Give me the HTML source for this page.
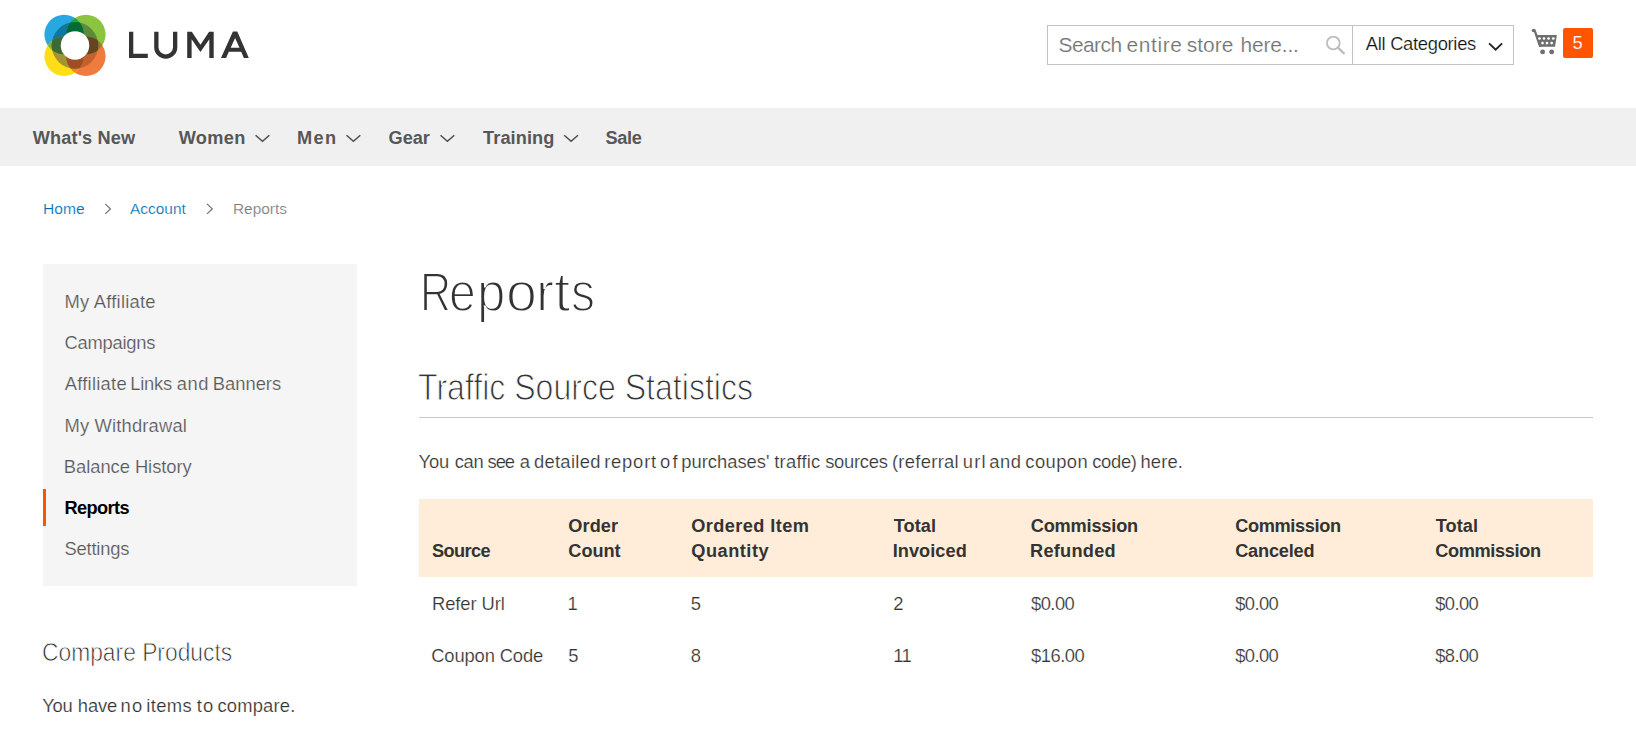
<!DOCTYPE html>
<html><head><meta charset="utf-8"><title>Reports</title>
<style>
html,body{margin:0;padding:0;background:#fff;}
body{width:1636px;height:733px;position:relative;overflow:hidden;font-family:"Liberation Sans",sans-serif;}
.t{position:absolute;line-height:1;white-space:nowrap;}
.g{position:absolute;font-size:0;line-height:1;white-space:nowrap;}
.g>.t{position:static;display:inline-block;vertical-align:baseline;}
.bx{position:absolute;}
svg.ov{position:absolute;left:0;top:0;}
</style></head><body>
<div class="bx" style="left:0;top:108px;width:1636px;height:58px;background:#f0f0f0"></div>
<div class="bx" style="left:1047px;top:25px;width:465px;height:38px;border:1px solid #c2c2c2;background:#fff"></div>
<div class="bx" style="left:1352px;top:26px;width:1px;height:38px;background:#c2c2c2"></div>
<div class="bx" style="left:1563px;top:28px;width:30px;height:30px;background:#ff5501;border-radius:2px"></div>
<div class="bx" style="left:43px;top:264px;width:314px;height:322px;background:#f5f5f5"></div>
<div class="bx" style="left:43px;top:489px;width:3px;height:37px;background:#ff5501"></div>
<div class="bx" style="left:419px;top:417px;width:1174px;height:1px;background:#c6c6c6"></div>
<div class="bx" style="left:419px;top:499px;width:1174px;height:78px;background:#ffedd9"></div>
<svg class="ov" width="1636" height="733" viewBox="0 0 1636 733">
<defs><clipPath id="cb"><circle cx="64.1" cy="34.5" r="19.7"/></clipPath><clipPath id="cg"><circle cx="85.9" cy="34.5" r="19.7"/></clipPath><clipPath id="co"><circle cx="85.9" cy="56.3" r="19.7"/></clipPath><clipPath id="cy"><circle cx="64.1" cy="56.3" r="19.7"/></clipPath><clipPath id="ring"><circle cx="75.0" cy="45.4" r="23.3"/></clipPath></defs><g><circle cx="64.1" cy="34.5" r="19.7" fill="#27a8e0"/><circle cx="85.9" cy="34.5" r="19.7" fill="#8bc53f"/><circle cx="85.9" cy="56.3" r="19.7" fill="#f07b3f"/><circle cx="64.1" cy="56.3" r="19.7" fill="#ffde17"/><circle cx="85.9" cy="34.5" r="19.7" fill="#1aa54a" clip-path="url(#cb)"/><circle cx="85.9" cy="56.3" r="19.7" fill="#9a7637" clip-path="url(#cg)"/><circle cx="64.1" cy="56.3" r="19.7" fill="#f5822a" clip-path="url(#co)"/><circle cx="64.1" cy="34.5" r="19.7" fill="#7db04a" clip-path="url(#cy)"/></g><g clip-path="url(#ring)"><circle cx="64.1" cy="34.5" r="19.7" fill="#0e76a1"/><circle cx="85.9" cy="34.5" r="19.7" fill="#5c8b3e"/><circle cx="85.9" cy="56.3" r="19.7" fill="#c3602f"/><circle cx="64.1" cy="56.3" r="19.7" fill="#a39332"/><circle cx="85.9" cy="34.5" r="19.7" fill="#016c34" clip-path="url(#cb)"/><circle cx="85.9" cy="56.3" r="19.7" fill="#634620" clip-path="url(#cg)"/><circle cx="64.1" cy="56.3" r="19.7" fill="#a04d24" clip-path="url(#co)"/><circle cx="64.1" cy="34.5" r="19.7" fill="#3b6b33" clip-path="url(#cy)"/></g><circle cx="75.0" cy="45.4" r="14.25" fill="#fff"/>
<polyline points="255.60,135.3 262.50,141.3 269.40,135.3" fill="none" stroke="#4d4d4d" stroke-width="1.5"/>
<polyline points="346.50,135.3 353.40,141.3 360.30,135.3" fill="none" stroke="#4d4d4d" stroke-width="1.5"/>
<polyline points="440.50,135.3 447.40,141.3 454.30,135.3" fill="none" stroke="#4d4d4d" stroke-width="1.5"/>
<polyline points="564.20,135.3 571.10,141.3 578.00,135.3" fill="none" stroke="#4d4d4d" stroke-width="1.5"/>
<polyline points="1489.10,43.4 1495.60,49.6 1502.10,43.4" fill="none" stroke="#222" stroke-width="1.9"/>
<polyline points="105.2,203.9 110.4,208.9 105.2,213.9" fill="none" stroke="#777" stroke-width="1.3"/>
<polyline points="207.0,203.9 212.2,208.9 207.0,213.9" fill="none" stroke="#777" stroke-width="1.3"/>
<circle cx="1333.3" cy="43.0" r="6.35" fill="none" stroke="#bdbdbd" stroke-width="1.8"/>
<line x1="1338.0" y1="47.6" x2="1343.9" y2="53.3" stroke="#bdbdbd" stroke-width="2.3" stroke-linecap="round"/>
<circle cx="1533.5" cy="30.6" r="1.75" fill="#6e6e6e"/>
<path d="M1533.3,29.9 L1535.3,29.3 L1537.5,35.05 L1541.6,46.85 L1539.0,46.85 L1535.0,35.05 Z" fill="#6e6e6e"/>
<path d="M1537.3,35.05 H1556.9 L1555,46.85 H1539.3 Z" fill="#6e6e6e"/>
<circle cx="1539.5" cy="38.5" r="1.35" fill="#fff"/>
<circle cx="1544.0" cy="38.5" r="1.35" fill="#fff"/>
<circle cx="1548.6" cy="38.5" r="1.35" fill="#fff"/>
<circle cx="1553.3" cy="38.5" r="1.35" fill="#fff"/>
<circle cx="1542.5" cy="43.1" r="1.35" fill="#fff"/>
<circle cx="1547.0" cy="43.1" r="1.35" fill="#fff"/>
<circle cx="1551.65" cy="43.1" r="1.35" fill="#fff"/>
<circle cx="1542.6" cy="51.9" r="2.45" fill="#6e6e6e"/><circle cx="1551.65" cy="51.9" r="2.45" fill="#6e6e6e"/>
<path d="M131.15,31.8 V55.85 H147.8" fill="none" stroke="#333" stroke-width="4.3"/>
<path d="M156.35,31.8 V47.2 A9.4,9.4 0 0 0 175.15,47.2 V31.8" fill="none" stroke="#333" stroke-width="4.3"/>
<path d="M187.2,57.9 V31.8 H191.8 L200.45,44.8 L209.1,31.8 H213.7 V57.9 H209.3 V39.3 L200.45,51.9 L191.6,39.3 V57.9 Z" fill="#333"/>
<path d="M221,57.9 L232.9,31.6 H237.3 L248.8,57.9 H243.9 L241.2,51.8 H228.8 L226.1,57.9 Z M235.1,38.0 L230.7,47.7 H239.5 Z" fill="#333" fill-rule="evenodd"/>
</svg>
<span class="t" id="n1" style="left:32.64px;top:129.11px;font-size:18.18px;color:#575757;font-weight:700;letter-spacing:0.149px;">What&#x27;s New</span>
<span class="t" id="n2" style="left:178.64px;top:129.11px;font-size:18.18px;color:#575757;font-weight:700;letter-spacing:0.380px;">Women</span>
<span class="t" id="n3" style="left:297.03px;top:129.11px;font-size:18.18px;color:#575757;font-weight:700;letter-spacing:1.365px;">Men</span>
<span class="t" id="n4" style="left:388.62px;top:129.11px;font-size:18.18px;color:#575757;font-weight:700;letter-spacing:-0.053px;">Gear</span>
<span class="t" id="n5" style="left:483.04px;top:129.11px;font-size:18.18px;color:#575757;font-weight:700;letter-spacing:0.089px;">Training</span>
<span class="t" id="n6" style="left:605.58px;top:129.11px;font-size:18.18px;color:#575757;font-weight:700;letter-spacing:-0.373px;">Sale</span>
<span class="g" style="left:1058.47px;top:35.30px"><span class="t" id="s1a" style="width:68.09px;font-size:20.91px;color:#727272;letter-spacing:-0.528px;-webkit-text-stroke:0.2px #fff;">Search</span> <span class="t" id="s1b" style="width:60.19px;font-size:20.91px;color:#727272;letter-spacing:0.618px;-webkit-text-stroke:0.2px #fff;">entire</span> <span class="t" id="s1c" style="width:53.70px;font-size:20.91px;color:#727272;letter-spacing:0.052px;-webkit-text-stroke:0.2px #fff;">store</span> <span class="t" id="s1d" style="font-size:20.91px;color:#727272;letter-spacing:-0.127px;-webkit-text-stroke:0.2px #fff;">here...</span></span>
<span class="t" id="s2" style="left:1365.87px;top:35.46px;font-size:18.36px;color:#111111;letter-spacing:-0.302px;-webkit-text-stroke:0.2px #fff;">All Categories</span>
<span class="t" id="s3" style="left:1572.60px;top:33.96px;font-size:18.36px;color:#ffffff;-webkit-text-stroke:0.2px #ff5501;">5</span>
<span class="t" id="b1" style="left:42.72px;top:201.56px;font-size:14.69px;color:#006bb4;-webkit-text-stroke:0.2px #fff;transform:scaleX(1.0632);transform-origin:0 0;">Home</span>
<span class="t" id="b2" style="left:130.43px;top:201.56px;font-size:14.69px;color:#006bb4;-webkit-text-stroke:0.2px #fff;transform:scaleX(1.0509);transform-origin:0 0;">Account</span>
<span class="t" id="b3" style="left:232.53px;top:201.56px;font-size:14.69px;color:#777777;-webkit-text-stroke:0.2px #fff;transform:scaleX(1.0480);transform-origin:0 0;">Reports</span>
<span class="t" id="m1" style="left:64.44px;top:293.46px;font-size:18.36px;color:#575757;letter-spacing:0.246px;-webkit-text-stroke:0.2px #f5f5f5;">My Affiliate</span>
<span class="t" id="m2" style="left:64.51px;top:333.96px;font-size:18.36px;color:#575757;letter-spacing:-0.255px;-webkit-text-stroke:0.2px #f5f5f5;">Campaigns</span>
<span class="g" style="left:64.64px;top:374.96px"><span class="t" id="m3a" style="width:65.58px;font-size:18.36px;color:#575757;letter-spacing:0.271px;-webkit-text-stroke:0.2px #f5f5f5;">Affiliate</span> <span class="t" id="m3b" style="width:46.59px;font-size:18.36px;color:#575757;letter-spacing:-0.195px;-webkit-text-stroke:0.2px #f5f5f5;">Links</span> <span class="t" id="m3c" style="width:35.99px;font-size:18.36px;color:#575757;letter-spacing:0.580px;-webkit-text-stroke:0.2px #f5f5f5;">and</span> <span class="t" id="m3d" style="font-size:18.36px;color:#575757;-webkit-text-stroke:0.2px #f5f5f5;">Banners</span></span>
<span class="t" id="m4" style="left:64.44px;top:417.46px;font-size:18.36px;color:#575757;letter-spacing:0.170px;-webkit-text-stroke:0.2px #f5f5f5;">My Withdrawal</span>
<span class="t" id="m5" style="left:63.83px;top:458.46px;font-size:18.36px;color:#575757;letter-spacing:-0.047px;-webkit-text-stroke:0.2px #f5f5f5;">Balance History</span>
<span class="t" id="m6" style="left:64.42px;top:498.61px;font-size:18.18px;color:#000000;font-weight:700;letter-spacing:-0.563px;">Reports</span>
<span class="t" id="m7" style="left:64.43px;top:540.46px;font-size:18.36px;color:#575757;letter-spacing:-0.181px;-webkit-text-stroke:0.2px #f5f5f5;">Settings</span>
<span class="t" id="c1" style="left:42.39px;top:639.85px;font-size:25.1px;color:#282828;-webkit-text-stroke:0.75px #fff;transform:scaleX(0.9090);transform-origin:0 0;">Compare Products</span>
<span class="g" style="left:42.30px;top:697.46px"><span class="t" id="c2a" style="width:35.48px;font-size:18.36px;color:#333333;letter-spacing:-0.310px;-webkit-text-stroke:0.2px #fff;">You</span> <span class="t" id="c2b" style="width:42.80px;font-size:18.36px;color:#333333;letter-spacing:-0.090px;-webkit-text-stroke:0.2px #fff;">have</span> <span class="t" id="c2c" style="width:25.67px;font-size:18.36px;color:#333333;letter-spacing:1.170px;-webkit-text-stroke:0.2px #fff;">no</span> <span class="t" id="c2d" style="width:50.52px;font-size:18.36px;color:#333333;letter-spacing:0.420px;-webkit-text-stroke:0.2px #fff;">items</span> <span class="t" id="c2e" style="width:20.79px;font-size:18.36px;color:#333333;letter-spacing:1.180px;-webkit-text-stroke:0.2px #fff;">to</span> <span class="t" id="c2f" style="font-size:18.36px;color:#333333;letter-spacing:0.177px;-webkit-text-stroke:0.2px #fff;">compare.</span></span>
<span class="g" style="left:420.03px;top:264.85px"><span class="t" id="h10" style="width:28.67px;font-size:55.7px;color:#333333;-webkit-text-stroke:1.8px #fff;transform:scaleX(0.7739);transform-origin:0 0;">R</span><span class="t" id="h11" style="width:28.68px;font-size:55.7px;color:#333333;-webkit-text-stroke:1.8px #fff;transform:scaleX(0.8660);transform-origin:0 0;">e</span><span class="t" id="h12" style="width:28.52px;font-size:55.7px;color:#333333;-webkit-text-stroke:1.8px #fff;transform:scaleX(0.9167);transform-origin:0 0;">p</span><span class="t" id="h13" style="width:29.70px;font-size:55.7px;color:#333333;-webkit-text-stroke:1.8px #fff;transform:scaleX(0.9980);transform-origin:0 0;">o</span><span class="t" id="h14" style="width:18.18px;font-size:55.7px;color:#333333;-webkit-text-stroke:1.8px #fff;transform:scaleX(0.9731);transform-origin:0 0;">r</span><span class="t" id="h15" style="width:17.07px;font-size:55.7px;color:#333333;-webkit-text-stroke:1.8px #fff;transform:scaleX(1.0577);transform-origin:0 0;">t</span><span class="t" id="h16" style="font-size:55.7px;color:#333333;-webkit-text-stroke:1.8px #fff;transform:scaleX(0.8614);transform-origin:0 0;">s</span></span>
<span class="t" id="h2" style="left:418.31px;top:370.48px;font-size:36.0px;color:#333333;-webkit-text-stroke:1.0px #fff;transform:scaleX(0.8907);transform-origin:0 0;">Traffic Source Statistics</span>
<span class="g" style="left:418.54px;top:453.46px"><span class="t" id="p1a" style="width:36.11px;font-size:18.36px;color:#333333;letter-spacing:-0.185px;-webkit-text-stroke:0.2px #fff;">You</span> <span class="t" id="p1b" style="width:32.85px;font-size:18.36px;color:#333333;letter-spacing:-0.295px;-webkit-text-stroke:0.2px #fff;">can</span> <span class="t" id="p1c" style="width:32.22px;font-size:18.36px;color:#333333;letter-spacing:-1.030px;-webkit-text-stroke:0.2px #fff;">see</span> <span class="t" id="p1d" style="width:14.20px;font-size:18.36px;color:#333333;-webkit-text-stroke:0.2px #fff;">a</span> <span class="t" id="p1e" style="width:70.25px;font-size:18.36px;color:#333333;letter-spacing:0.316px;-webkit-text-stroke:0.2px #fff;">detailed</span> <span class="t" id="p1f" style="width:55.91px;font-size:18.36px;color:#333333;letter-spacing:0.812px;-webkit-text-stroke:0.2px #fff;">report</span> <span class="t" id="p1g" style="width:21.30px;font-size:18.36px;color:#333333;letter-spacing:2.150px;-webkit-text-stroke:0.2px #fff;">of</span> <span class="t" id="p1h" style="width:92.90px;font-size:18.36px;color:#333333;letter-spacing:-0.013px;-webkit-text-stroke:0.2px #fff;">purchases&#x27;</span> <span class="t" id="p1i" style="width:50.92px;font-size:18.36px;color:#333333;letter-spacing:0.248px;-webkit-text-stroke:0.2px #fff;">traffic</span> <span class="t" id="p1j" style="width:66.81px;font-size:18.36px;color:#333333;letter-spacing:-0.268px;-webkit-text-stroke:0.2px #fff;">sources</span> <span class="t" id="p1k" style="width:70.89px;font-size:18.36px;color:#333333;letter-spacing:0.309px;-webkit-text-stroke:0.2px #fff;">(referral</span> <span class="t" id="p1l" style="width:26.54px;font-size:18.36px;color:#333333;letter-spacing:1.220px;-webkit-text-stroke:0.2px #fff;">url</span> <span class="t" id="p1m" style="width:36.01px;font-size:18.36px;color:#333333;letter-spacing:0.495px;-webkit-text-stroke:0.2px #fff;">and</span> <span class="t" id="p1n" style="width:66.81px;font-size:18.36px;color:#333333;letter-spacing:0.418px;-webkit-text-stroke:0.2px #fff;">coupon</span> <span class="t" id="p1o" style="width:48.37px;font-size:18.36px;color:#333333;letter-spacing:-0.288px;-webkit-text-stroke:0.2px #fff;">code)</span> <span class="t" id="p1p" style="font-size:18.36px;color:#333333;letter-spacing:0.142px;-webkit-text-stroke:0.2px #fff;">here.</span></span>
<span class="t" id="t1" style="left:431.97px;top:541.61px;font-size:18.18px;color:#333333;font-weight:700;letter-spacing:-0.594px;">Source</span>
<span class="t" id="t2a" style="left:568.30px;top:516.61px;font-size:18.18px;color:#333333;font-weight:700;letter-spacing:0.077px;">Order</span>
<span class="t" id="t2b" style="left:568.30px;top:541.61px;font-size:18.18px;color:#333333;font-weight:700;letter-spacing:-0.040px;">Count</span>
<span class="t" id="t3a" style="left:691.30px;top:516.61px;font-size:18.18px;color:#333333;font-weight:700;letter-spacing:0.408px;">Ordered Item</span>
<span class="t" id="t3b" style="left:691.29px;top:541.61px;font-size:18.18px;color:#333333;font-weight:700;letter-spacing:0.516px;">Quantity</span>
<span class="t" id="t4a" style="left:893.73px;top:516.61px;font-size:18.18px;color:#333333;font-weight:700;letter-spacing:0.037px;">Total</span>
<span class="t" id="t4b" style="left:892.73px;top:541.61px;font-size:18.18px;color:#333333;font-weight:700;letter-spacing:0.047px;">Invoiced</span>
<span class="t" id="t5a" style="left:1030.76px;top:516.61px;font-size:18.18px;color:#333333;font-weight:700;letter-spacing:-0.179px;">Commission</span>
<span class="t" id="t5b" style="left:1030.07px;top:541.61px;font-size:18.18px;color:#333333;font-weight:700;letter-spacing:0.253px;">Refunded</span>
<span class="t" id="t6a" style="left:1235.14px;top:516.61px;font-size:18.18px;color:#333333;font-weight:700;letter-spacing:-0.334px;">Commission</span>
<span class="t" id="t6b" style="left:1235.14px;top:541.61px;font-size:18.18px;color:#333333;font-weight:700;letter-spacing:-0.186px;">Canceled</span>
<span class="t" id="t7a" style="left:1435.83px;top:516.61px;font-size:18.18px;color:#333333;font-weight:700;letter-spacing:0.013px;">Total</span>
<span class="t" id="t7b" style="left:1435.14px;top:541.61px;font-size:18.18px;color:#333333;font-weight:700;letter-spacing:-0.332px;">Commission</span>
<span class="t" id="r1a" style="left:431.97px;top:595.46px;font-size:18.36px;color:#333333;letter-spacing:-0.085px;-webkit-text-stroke:0.2px #fff;">Refer Url</span>
<span class="t" id="r1b" style="left:567.41px;top:595.46px;font-size:18.36px;color:#333333;-webkit-text-stroke:0.2px #fff;">1</span>
<span class="t" id="r1c" style="left:690.64px;top:595.46px;font-size:18.36px;color:#333333;-webkit-text-stroke:0.2px #fff;">5</span>
<span class="t" id="r1d" style="left:893.19px;top:595.46px;font-size:18.36px;color:#333333;-webkit-text-stroke:0.2px #fff;">2</span>
<span class="t" id="r1e" style="left:1031.00px;top:595.46px;font-size:18.36px;color:#333333;letter-spacing:-0.527px;-webkit-text-stroke:0.2px #fff;">$0.00</span>
<span class="t" id="r1f" style="left:1235.25px;top:595.46px;font-size:18.36px;color:#333333;letter-spacing:-0.590px;-webkit-text-stroke:0.2px #fff;">$0.00</span>
<span class="t" id="r1g" style="left:1435.25px;top:595.46px;font-size:18.36px;color:#333333;letter-spacing:-0.590px;-webkit-text-stroke:0.2px #fff;">$0.00</span>
<span class="t" id="r2a" style="left:431.25px;top:647.46px;font-size:18.36px;color:#333333;letter-spacing:-0.137px;-webkit-text-stroke:0.2px #fff;">Coupon Code</span>
<span class="t" id="r2b" style="left:568.21px;top:647.46px;font-size:18.36px;color:#333333;-webkit-text-stroke:0.2px #fff;">5</span>
<span class="t" id="r2c" style="left:690.66px;top:647.46px;font-size:18.36px;color:#333333;-webkit-text-stroke:0.2px #fff;">8</span>
<span class="t" id="r2d" style="left:893.28px;top:647.46px;font-size:18.36px;color:#333333;letter-spacing:-0.680px;-webkit-text-stroke:0.2px #fff;">11</span>
<span class="t" id="r2e" style="left:1031.00px;top:647.46px;font-size:18.36px;color:#333333;letter-spacing:-0.466px;-webkit-text-stroke:0.2px #fff;">$16.00</span>
<span class="t" id="r2f" style="left:1235.25px;top:647.46px;font-size:18.36px;color:#333333;letter-spacing:-0.590px;-webkit-text-stroke:0.2px #fff;">$0.00</span>
<span class="t" id="r2g" style="left:1435.25px;top:647.46px;font-size:18.36px;color:#333333;letter-spacing:-0.590px;-webkit-text-stroke:0.2px #fff;">$8.00</span>
</body></html>
